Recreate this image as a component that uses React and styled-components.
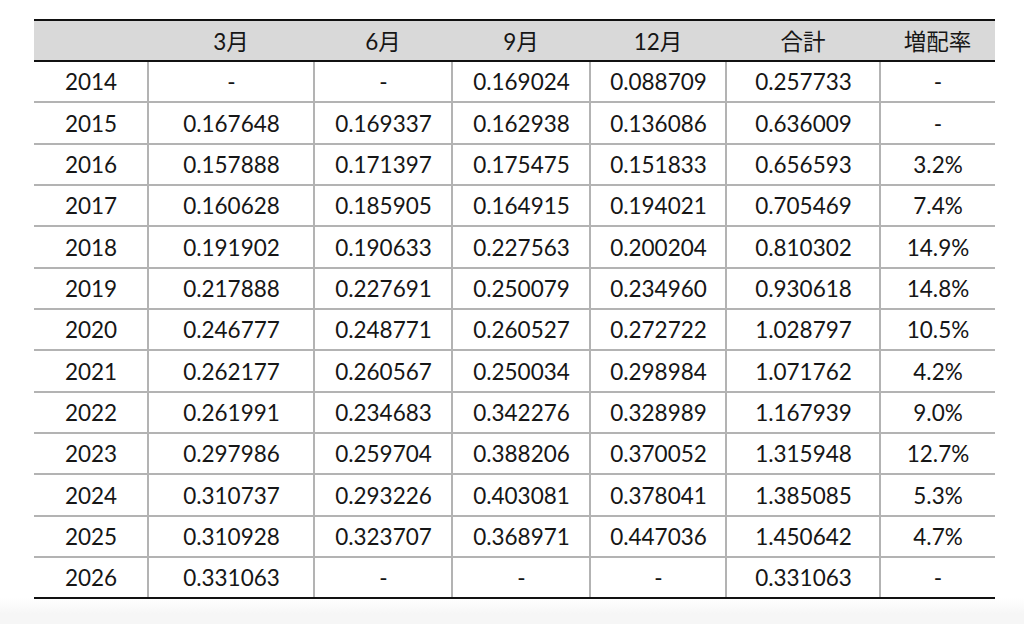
import React from "react";
import styled, { createGlobalStyle } from "styled-components";

const GlobalStyle = createGlobalStyle`
  body {
    margin: 0;
    font-family: Lato, "Noto Sans CJK JP", sans-serif;
    color: #161616;
  }
`;

const COLUMNS = "114px 166px 138px 138px 136px 154px 115px";

const Page = styled.div`
  min-height: 624px;
  padding: 19px 0 0 34px;
  box-sizing: border-box;
  background: linear-gradient(to bottom, #ffffff 598px, #f6f6f6 614px);
`;

const Table = styled.div`
  width: 961px;
`;

const HeaderRow = styled.div`
  display: grid;
  grid-template-columns: ${COLUMNS};
  height: 43px;
  box-sizing: border-box;
  background: #d9d9d9;
  border-top: 2px solid #111;
  border-bottom: 2px solid #111;
`;

const Row = styled.div`
  display: grid;
  grid-template-columns: ${COLUMNS};
  height: 41.35px;
  box-sizing: border-box;
  border-bottom: 2px solid ${(p) => (p.$last ? "#111" : "#b3b3b3")};
`;

const HeadCell = styled.div`
  display: flex;
  align-items: center;
  justify-content: center;
  font-size: 22.5px;
  padding-bottom: 1px;
`;

const Cell = styled.div`
  display: flex;
  align-items: center;
  justify-content: center;
  font-size: 22.5px;
  margin-left: ${(p) => (p.$first ? "0" : "-1px")};
  border-left: ${(p) => (p.$first ? "none" : "2px solid #b3b3b3")};
`;

const headers = ["", "3月", "6月", "9月", "12月", "合計", "増配率"];

const rows = [
  ["2014", "-", "-", "0.169024", "0.088709", "0.257733", "-"],
  ["2015", "0.167648", "0.169337", "0.162938", "0.136086", "0.636009", "-"],
  ["2016", "0.157888", "0.171397", "0.175475", "0.151833", "0.656593", "3.2%"],
  ["2017", "0.160628", "0.185905", "0.164915", "0.194021", "0.705469", "7.4%"],
  ["2018", "0.191902", "0.190633", "0.227563", "0.200204", "0.810302", "14.9%"],
  ["2019", "0.217888", "0.227691", "0.250079", "0.234960", "0.930618", "14.8%"],
  ["2020", "0.246777", "0.248771", "0.260527", "0.272722", "1.028797", "10.5%"],
  ["2021", "0.262177", "0.260567", "0.250034", "0.298984", "1.071762", "4.2%"],
  ["2022", "0.261991", "0.234683", "0.342276", "0.328989", "1.167939", "9.0%"],
  ["2023", "0.297986", "0.259704", "0.388206", "0.370052", "1.315948", "12.7%"],
  ["2024", "0.310737", "0.293226", "0.403081", "0.378041", "1.385085", "5.3%"],
  ["2025", "0.310928", "0.323707", "0.368971", "0.447036", "1.450642", "4.7%"],
  ["2026", "0.331063", "-", "-", "-", "0.331063", "-"],
];

export default function App() {
  return (
    <Page>
      <GlobalStyle />
      <Table>
        <HeaderRow>
          {headers.map((h, i) => (
            <HeadCell key={i}>{h}</HeadCell>
          ))}
        </HeaderRow>
        {rows.map((r, ri) => (
          <Row key={r[0]} $last={ri === rows.length - 1}>
            {r.map((v, ci) => (
              <Cell key={ci} $first={ci === 0}>
                {v}
              </Cell>
            ))}
          </Row>
        ))}
      </Table>
    </Page>
  );
}
